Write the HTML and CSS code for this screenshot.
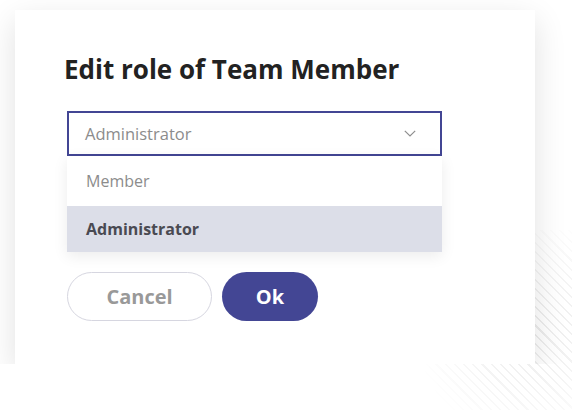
FILE: index.html
```html
<!DOCTYPE html>
<html lang="en">
<head>
<meta charset="UTF-8">
<meta name="viewport" content="width=device-width, initial-scale=1.0">
<title>Edit role</title>
<link rel="stylesheet" href="styles.css">
</head>
<body>
<!-- Background decoration -->
<div class="stripes"></div>

<!-- Edit role dialog -->
<div class="dialog">
  <h1 class="dialog-title">Edit role of Team Member</h1>

  <div class="role-select">
    <div class="select-box">
      <span class="select-value">Administrator</span>
      <svg class="chevron" width="12" height="7" viewBox="0 0 12 7">
        <path d="M0.8 0.8 L6 6 L11.2 0.8" fill="none" stroke="#8e8e8e" stroke-width="1.2"/>
      </svg>
    </div>
    <ul class="select-options">
      <li>Member</li>
      <li class="selected">Administrator</li>
    </ul>
  </div>

  <div class="dialog-actions">
    <button class="btn btn-cancel">Cancel</button>
    <button class="btn btn-ok">Ok</button>
  </div>
</div>
</body>
</html>
```

FILE: styles.css
```css
body {
  font-family: "Open Sans", sans-serif;
  margin: 0;
  padding: 0;
  background-color: #fff;
  color: #222;
}

.stripes {
  position: absolute;
  right: 0;
  bottom: 0;
  width: 190px;
  height: 180px;
  background: repeating-linear-gradient(45deg, #fff 0, #fff 5px, #ebebeb 5px, #ebebeb 6.5px);
  -webkit-mask-image: radial-gradient(circle at 78% 55%, #000 0, rgba(0,0,0,0.6) 30%, transparent 65%);
  mask-image: radial-gradient(circle at 78% 55%, #000 0, rgba(0,0,0,0.6) 30%, transparent 65%);
}

.dialog {
  position: relative;
  width: 520px;
  height: 354px;
  margin: 10px 0 0 15px;
  padding: 41px 0 0 52px;
  box-sizing: border-box;
  background-color: #fff;
  box-shadow: 0 10px 30px rgba(0,0,0,0.12);
}

.dialog-title {
  margin: 0 0 24px -3px;
  font-size: 26px;
  line-height: 36px;
  font-weight: 700;
  color: #222;
}

.role-select {
  width: 375px;
}

.select-box {
  display: flex;
  align-items: center;
  justify-content: space-between;
  height: 45px;
  padding: 0 24px 0 16px;
  box-sizing: border-box;
  border: 2px solid #434694;
}

.select-value {
  font-size: 16.5px;
  color: #8c8c8c;
}

.chevron {
  display: block;
}

.select-options {
  list-style-type: none;
  margin: 0;
  padding: 0;
  background-color: #fff;
  box-shadow: 0 4px 14px rgba(0,0,0,0.08);
}

.select-options li {
  height: 50px;
  line-height: 50px;
  padding: 0 19px;
  font-size: 16px;
  color: #8c8c8c;
}

.select-options li.selected {
  height: 46px;
  line-height: 46px;
  background-color: #dcdee8;
  color: #4a4a52;
  font-weight: 700;
}

.dialog-actions {
  display: flex;
  gap: 10px;
  margin-top: 20px;
}

.btn {
  height: 49px;
  border-radius: 25px;
  font-family: "Open Sans", sans-serif;
  font-size: 20px;
  font-weight: 700;
  cursor: pointer;
}

.btn-cancel {
  width: 145px;
  background-color: #fff;
  border: 1px solid #d6d6e0;
  color: #999;
}

.btn-ok {
  width: 96px;
  background-color: #434694;
  border: none;
  color: #fff;
}
```
